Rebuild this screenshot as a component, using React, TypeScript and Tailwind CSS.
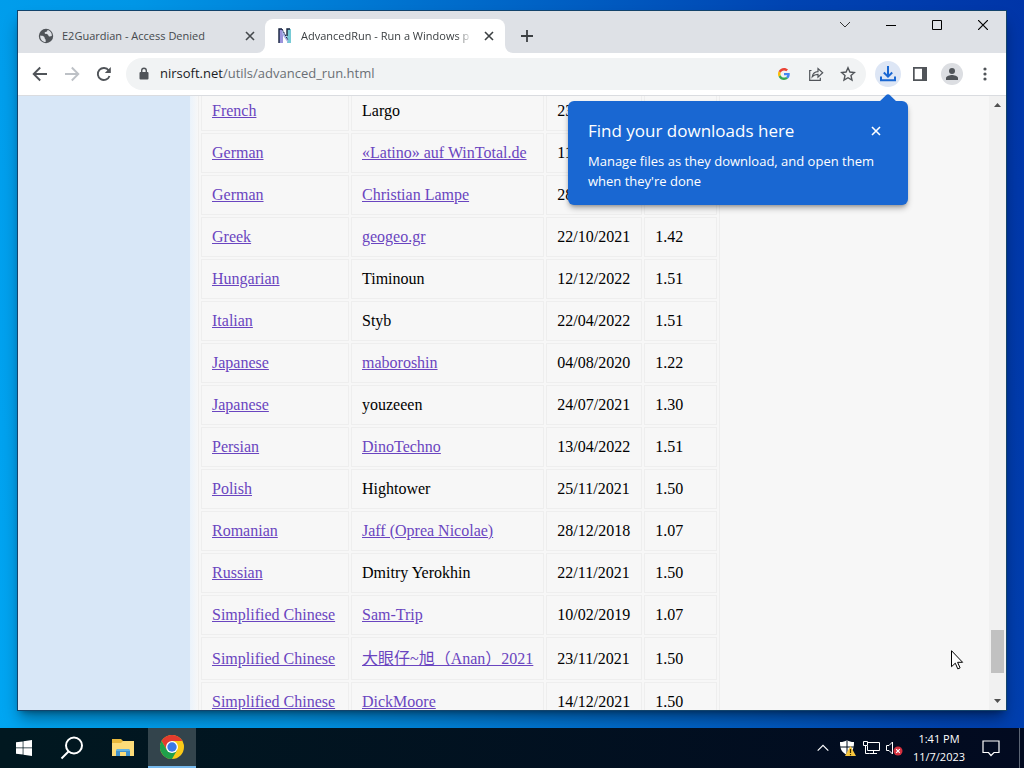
import React from "react";

type Row = { lang: string; author: string; linked: boolean; date: string; version: string };

const rows: Row[] = [
  { lang: "French", author: "Largo", linked: false, date: "23/11/2021", version: "1.50" },
  { lang: "German", author: "«Latino» auf WinTotal.de", linked: true, date: "11/12/2022", version: "1.51" },
  { lang: "German", author: "Christian Lampe", linked: true, date: "28/11/2021", version: "1.50" },
  { lang: "Greek", author: "geogeo.gr", linked: true, date: "22/10/2021", version: "1.42" },
  { lang: "Hungarian", author: "Timinoun", linked: false, date: "12/12/2022", version: "1.51" },
  { lang: "Italian", author: "Styb", linked: false, date: "22/04/2022", version: "1.51" },
  { lang: "Japanese", author: "maboroshin", linked: true, date: "04/08/2020", version: "1.22" },
  { lang: "Japanese", author: "youzeeen", linked: false, date: "24/07/2021", version: "1.30" },
  { lang: "Persian", author: "DinoTechno", linked: true, date: "13/04/2022", version: "1.51" },
  { lang: "Polish", author: "Hightower", linked: false, date: "25/11/2021", version: "1.50" },
  { lang: "Romanian", author: "Jaff (Oprea Nicolae)", linked: true, date: "28/12/2018", version: "1.07" },
  { lang: "Russian", author: "Dmitry Yerokhin", linked: false, date: "22/11/2021", version: "1.50" },
  { lang: "Simplified Chinese", author: "Sam-Trip", linked: true, date: "10/02/2019", version: "1.07" },
  { lang: "Simplified Chinese", author: "大眼仔~旭（Anan）2021", linked: true, date: "23/11/2021", version: "1.50" },
  { lang: "Simplified Chinese", author: "DickMoore", linked: true, date: "14/12/2021", version: "1.50" },
];

function CloseIcon() {
  return (
    <svg width="10" height="10" viewBox="0 0 10 10" fill="none" stroke="currentColor" strokeWidth="1.6">
      <path d="M1 1l8 8M9 1l-8 8" />
    </svg>
  );
}

function TabStrip() {
  return (
    <div className="flex h-[42px] shrink-0 bg-[#dee1e6]">
      <div className="flex w-[247px] items-center pt-2 pl-5 text-[#45494d]">
        <svg width="16" height="16" viewBox="0 0 16 16" className="shrink-0">
          <circle cx="8" cy="8" r="7.2" fill="#505459" />
          <path d="M2.200 7.500c1.600.2 3.200.3 4 1.200.8 1 .1 1.600 1 2.400.7.6.5 1.600.5 3C4.500 14 2 11.500 2.200 7.500zM9.500 1.900c-.4 1-.2 1.600-1.200 1.900-1.300.3-1.800.6-1.600 1.500.3.900 2.100.5 3 1.100.9.700.6 1.700 1.700 2 .8.200 1.400-.2 2.400-.5.400-2.800-1.500-5.300-4.300-6z" fill="#dee1e6" />
        </svg>
        <span className="ml-2 grow truncate text-[11px]">E2Guardian - Access Denied</span>
        <button aria-label="Close tab" className="mr-[10px] flex size-[10px] items-center justify-center"><CloseIcon /></button>
      </div>
      <div className="relative mt-2 flex w-[240px] items-center rounded-t-lg bg-white pl-[13px] text-[#3c4043]">
        <svg width="8" height="8" viewBox="0 0 8 8" className="absolute bottom-0 -left-2"><path d="M8 0v8H0a8 8 0 0 0 8-8z" fill="#fff" /></svg>
        <svg width="8" height="8" viewBox="0 0 8 8" className="absolute -right-2 bottom-0"><path d="M0 0v8h8a8 8 0 0 1-8-8z" fill="#fff" /></svg>
        <svg width="14" height="16" viewBox="0 0 14 16" className="shrink-0">
          <path d="M1 1h4v14H1z" fill="#9c94dc" />
          <path d="M9 1h4v14H9z" fill="#78cbd6" />
          <path d="M4 1l6 10v4L4 6z" fill="#a9b4e6" />
          <path d="M1 15V1h3M9 8V1h3" fill="none" stroke="#14213c" strokeWidth="1.400" />
          <path d="M4 1l6 11" fill="none" stroke="#14213c" strokeDasharray="2 1" />
        </svg>
        <span className="ml-[9px] w-[171px] overflow-hidden text-[11px] whitespace-nowrap [mask-image:linear-gradient(to_right,black_156px,transparent_171px)]">AdvancedRun - Run a Windows p</span>
        <button aria-label="Close tab" className="ml-3 flex size-[10px] shrink-0 items-center justify-center"><CloseIcon /></button>
      </div>
      <button aria-label="New tab" className="mt-2 ml-4 flex w-3 items-center justify-center text-[#3c4043]">
        <svg width="12" height="12" viewBox="0 0 12 12" className="shrink-0"><path d="M6 0v12M0 6h12" stroke="currentColor" strokeWidth="1.800" /></svg>
      </button>
      <div className="ml-auto flex h-7 text-black">
        <button aria-label="Search tabs" className="flex w-[46px] items-center justify-center"><svg width="12" height="8" viewBox="0 0 12 8"><path d="M1 1l5 5 5-5" fill="none" stroke="#333" /></svg></button>
        <button aria-label="Minimize" className="flex w-[46px] items-center justify-center"><svg width="10" height="10" viewBox="0 0 10 10"><path d="M0 5.500h10" stroke="currentColor" /></svg></button>
        <button aria-label="Maximize" className="flex w-[46px] items-center justify-center"><svg width="10" height="10" viewBox="0 0 10 10"><path d="M.5.500h9v9h-9z" fill="none" stroke="currentColor" /></svg></button>
        <button aria-label="Close window" className="flex w-[46px] items-center justify-center"><svg width="10" height="10" viewBox="0 0 10 10"><path d="M0 0l10 10M10 0L0 10" stroke="currentColor" strokeWidth="1.200" /></svg></button>
      </div>
    </div>
  );
}

function DownloadBubble() {
  return (
    <div role="dialog" aria-label="Find your downloads here" className="absolute top-10 right-[-7px] z-10 w-[340px] rounded-md bg-[#1967d2] px-5 pt-[18px] pb-[14px] text-left text-white shadow-md shadow-black/30">
      <svg width="18" height="8" viewBox="0 0 18 8" className="absolute -top-[7px] right-[11px]"><path d="M0 8L7.500.800q1.500-1.300 3 0L18 8z" fill="#1967d2" /></svg>
      <div className="flex items-center justify-between">
        <h2 className="text-[17px] leading-6">Find your downloads here</h2>
        <button aria-label="Dismiss" className="mr-[7px] flex size-[10px] items-center justify-center"><CloseIcon /></button>
      </div>
      <p className="mt-2 text-[13px] leading-5 font-medium whitespace-nowrap">Manage files as they download, and open them<br />when they're done</p>
    </div>
  );
}

function Toolbar() {
  return (
    <div className="flex h-[43px] shrink-0 items-center border-b border-[#dadce0] bg-white pl-[14px] text-[#505459]">
      <div className="flex gap-4">
        <button aria-label="Back"><svg width="16" height="16" viewBox="0 0 16 16" fill="none" stroke="currentColor" strokeWidth="1.900"><path d="M15 8H2M8.200 1.500L1.700 8l6.500 6.500" /></svg></button>
        <button aria-label="Forward" className="text-[#bdc1c6]"><svg width="16" height="16" viewBox="0 0 16 16" fill="none" stroke="currentColor" strokeWidth="1.900"><path d="M1 8h13M7.800 1.500L14.300 8l-6.500 6.500" /></svg></button>
        <button aria-label="Reload"><svg width="16" height="16" viewBox="0 0 16 16"><path d="M13.500 10a6 6 0 1 1-.8-5.500" fill="none" stroke="currentColor" strokeWidth="1.900" /><path d="M14.800 1v6h-6z" fill="currentColor" /></svg></button>
      </div>
      <div className="ml-[14px] flex h-8 min-w-0 grow items-center rounded-full bg-[#f1f3f4] pr-[10px] pl-3">
        <svg width="12" height="14" viewBox="0 0 12 14" className="shrink-0"><rect x="1.500" y="5" width="9" height="7.500" rx="1" fill="currentColor" /><path d="M3.700 5V3.500a2.300 2.300 0 0 1 4.600 0V5" fill="none" stroke="currentColor" strokeWidth="1.400" /></svg>
        <a href="#address" className="ml-[10px] grow text-[13px] text-[#6a6f74]"><span className="text-[#202124]">nirsoft.net</span>/utils/advanced_run.html</a>
        <div className="flex items-center gap-4">
          <button aria-label="Search with Google">
            <svg width="16" height="16" viewBox="0 0 48 48" className="p-[2px]"><path fill="#EA4335" d="M24 9.500c3.540 0 6.710 1.220 9.210 3.600l6.850-6.850C35.900 2.380 30.470 0 24 0 14.620 0 6.510 5.380 2.560 13.220l7.980 6.190C12.430 13.720 17.740 9.500 24 9.500z" /><path fill="#4285F4" d="M46.980 24.550c0-1.570-.15-3.090-.38-4.550H24v9.020h12.940c-.58 2.960-2.260 5.480-4.780 7.180l7.730 6c4.510-4.180 7.090-10.360 7.090-17.650z" /><path fill="#FBBC05" d="M10.530 28.590A14.500 14.500 0 0 1 9.770 24c0-1.600.27-3.140.76-4.590l-7.980-6.190A23.900 23.900 0 0 0 0 24c0 3.880.92 7.540 2.560 10.780z" /><path fill="#34A853" d="M24 48c6.480 0 11.930-2.130 15.890-5.810l-7.730-6c-2.150 1.450-4.920 2.300-8.160 2.300-6.260 0-11.570-4.220-13.470-9.910l-7.980 6.190C6.510 42.620 14.620 48 24 48z" /></svg>
          </button>
          <button aria-label="Share"><svg width="16" height="16" viewBox="0 0 16 16" fill="none" stroke="currentColor" strokeWidth="1.200"><path d="M3.500 4.500H1.700v9.800h10.600v-2.500M4.300 10.700c.5-3.200 2.400-4.900 5.700-5V2.500l4.700 4.300-4.700 4.400V8.300c-2.500 0-4.200.6-5.700 2.400z" /></svg></button>
          <button aria-label="Bookmark this page"><svg width="16" height="16" viewBox="0 0 16 16" fill="none" stroke="currentColor" strokeWidth="1.400"><path d="M8 1.800l1.900 4.200 4.600.5L11 9.600l1 4.500-4-2.400-4 2.400 1-4.500L1.500 6.500l4.600-.5z" /></svg></button>
        </div>
      </div>
      <div className="ml-[9px] flex items-center">
        <div className="relative flex size-[26px] items-center justify-center rounded-full bg-[#dde6f5]">
          <button aria-label="Downloads" className="text-[#1967d2]"><svg width="16" height="16" viewBox="0 0 16 16" fill="none" stroke="currentColor" strokeWidth="2"><path d="M8 0v10M3.800 6.500L8 10.700l4.200-4.200M1 10.500v3.700h14v-3.700" /></svg></button>
          <DownloadBubble />
        </div>
        <button aria-label="Side panel" className="ml-3"><svg width="14" height="14" viewBox="0 0 14 14"><path d="M0 0h14v14H0zM1.700 1.700v10.600h7.300V1.700z" fillRule="evenodd" fill="currentColor" /></svg></button>
        <button aria-label="Profile" className="ml-[14px] flex size-[22px] items-center justify-center rounded-full bg-[#dcdee2]"><svg width="14" height="14" viewBox="0 0 14 14" fill="currentColor"><circle cx="7" cy="4" r="3" /><path d="M1 13v-2c0-2 4-3 6-3s6 1 6 3v2z" /></svg></button>
        <button aria-label="Menu" className="mr-[19px] ml-5"><svg width="4" height="14" viewBox="0 0 4 14" fill="currentColor"><circle cx="2" cy="2" r="1.600" /><circle cx="2" cy="7" r="1.600" /><circle cx="2" cy="12" r="1.600" /></svg></button>
      </div>
    </div>
  );
}

function PageContent() {
  return (
    <div className="flex min-h-0 grow overflow-hidden bg-[#f7f7f7]">
      <div className="w-[172px] shrink-0 bg-[#d8e7f7]" />
      <div className="w-2 shrink-0 bg-linear-to-r from-[#ebf3fb] to-[#f7f7f7]" />
      <div className="min-w-0 grow">
        <table className="-mt-2 border-separate border-spacing-0.5 border border-[#eeeeee] text-left [font-family:'Liberation_Serif','Noto_Sans_CJK_SC',serif] text-base leading-[18px] text-black">
          <tbody>
            {rows.map((r, i) => (
              <tr key={i} className={i === 13 ? "h-[43px]" : "h-10"}>
                <td className="w-[148px] border border-[#eeeeee] px-[10px]"><a href="#language" className="text-[#6a45c0] underline">{r.lang}</a></td>
                <td className="w-[193px] border border-[#eeeeee] px-[10px] whitespace-nowrap">{r.linked ? <a href="#author" className="text-[#6a45c0] underline">{r.author}</a> : r.author}</td>
                <td className="w-24 border border-[#eeeeee] px-[10px]">{r.date}</td>
                <td className="w-[73px] border border-[#eeeeee] px-[10px]">{r.version}</td>
              </tr>
            ))}
          </tbody>
        </table>
      </div>
      <div className="flex w-[17px] shrink-0 flex-col items-center bg-[#f1f1f1]">
        <svg width="7" height="4" viewBox="0 0 7 4" className="mt-[7px]"><path d="M0 4l3.500-4L7 4z" fill="#505050" /></svg>
        <div className="grow" />
        <div className="h-[43px] w-[13px] bg-[#c1c1c1]" />
        <svg width="7" height="4" viewBox="0 0 7 4" className="mt-[26px] mb-[7px]"><path d="M0 0l3.500 4L7 0z" fill="#505050" /></svg>
      </div>
    </div>
  );
}

function Taskbar() {
  return (
    <div className="flex h-10 shrink-0 bg-linear-to-r from-[#011820] to-[#020a20] text-white">
      <button aria-label="Start" className="flex w-12 items-center justify-center"><svg width="16" height="16" viewBox="0 0 16 16" fill="#fff"><path d="M0 2.300l6.700-.9v6.200H0zM7.400 1.300L16 0v7.600H7.400zM0 8.300h6.700v6.300L0 13.700zM7.400 8.300H16V16l-8.600-1.200z" /></svg></button>
      <button aria-label="Search" className="flex w-12 items-center justify-center"><svg width="24" height="24" viewBox="0 0 24 24" fill="none" stroke="#fff" strokeWidth="2"><circle cx="14" cy="9.500" r="8" /><path d="M8.500 15.500L1.500 22.500" /></svg></button>
      <button aria-label="File Explorer" className="flex w-[52px] items-center justify-center pl-[2px]"><svg width="22" height="20" viewBox="0 0 22 20"><path d="M0 1h9l2 2h11v15H0z" fill="#e8b83d" /><path d="M0 5h9l2-2h11v15H0z" fill="#fddc79" /><path d="M4 18v-6l2-1h10l2 1v6h-4v-4H8v4z" fill="#4293cd" /><path d="M4 12l2-1h10l2 1v1H4z" fill="#65b4e2" /></svg></button>
      <button aria-label="Google Chrome" className="flex w-12 items-center justify-center border-b-2 border-[#76b9ed] bg-[#33444c]">
        <svg width="24" height="24" viewBox="0 0 24 24"><circle cx="12" cy="12" r="12" fill="#fbc917" /><path d="M12 6h10.400A12 12 0 0 0 1.600 6L6.800 15z" fill="#e33b2e" /><path d="M1.600 6A12 12 0 0 0 12 24l5.200-9-5.200 2-5.200-2z" fill="#1fa04b" /><circle cx="12" cy="12" r="6" fill="#fff" /><circle cx="12" cy="12" r="4.700" fill="#3b78e7" /></svg>
      </button>
      <div className="ml-auto flex items-center">
        <button aria-label="Show hidden icons"><svg width="12" height="8" viewBox="0 0 12 8"><path d="M.7 6.700L6 1.400l5.300 5.300" fill="none" stroke="#fff" strokeWidth="1.200" /></svg></button>
        <button aria-label="Windows Security" className="ml-[11px]"><svg width="16" height="16" viewBox="0 0 16 16"><path d="M7 0c2 1.500 4 2 7 2 0 6-1 10-7 13C1 12 0 8 0 2c3 0 5-.5 7-2z" fill="#fff" /><path d="M7 0v15M0 7h14" stroke="#021020" /><path d="M10.500 6L16 16H5z" fill="#f8c63d" /><path d="M10.500 9v4M10.500 14v1.200" stroke="#3a2b00" strokeWidth="1.200" /></svg></button>
        <button aria-label="Network" className="ml-[7px]"><svg width="17" height="14" viewBox="0 0 17 14" fill="none" stroke="#fff"><path d="M5 1.500h11.500v8H4.500V5M10.500 9.500v3M6.500 12.500H14M.5.500h4v4h-4zM2.500 4.500v8h4" /></svg></button>
        <button aria-label="Volume muted" className="ml-[6px]"><svg width="17" height="16" viewBox="0 0 17 16"><path d="M.5 5.500H3L6.500 2v12L3 10.500H.5z" fill="none" stroke="#fff" /><circle cx="12" cy="11" r="4.500" fill="#d5303e" /><path d="M10.200 9.200l3.600 3.600M13.800 9.200l-3.600 3.600" stroke="#fff" strokeWidth="1.200" /></svg></button>
        <div className="ml-[9px] w-[54px] text-center text-[11px] leading-[18px] whitespace-nowrap"><div>1:41 PM</div><div>11/7/2023</div></div>
        <button aria-label="Notifications" className="ml-4"><svg width="18" height="18" viewBox="0 0 18 18" fill="none" stroke="#fff" strokeWidth="1.200"><path d="M1 2h16v11.500h-5L9 16.500l-2.500-3H1z" /></svg></button>
        <div className="mr-1 ml-[19px] h-10 w-px bg-[#5c6575]" />
      </div>
    </div>
  );
}

export default function App() {
  return (
    <div className="relative flex h-screen flex-col overflow-hidden bg-[linear-gradient(78deg,#00a6f2_0%,#0096e6_25%,#006fcd_50%,#0044b2_80%,#0035a8_100%)] [font-family:'Open_Sans','Noto_Sans',sans-serif]">
      <div className="flex min-h-0 grow px-[17px] pt-[10px] pb-[17px]">
        <div className="flex min-w-0 grow flex-col border border-[#12436b] shadow-lg shadow-black/40">
          <TabStrip />
          <Toolbar />
          <PageContent />
        </div>
      </div>
      <Taskbar />
      <svg width="13" height="20" viewBox="0 0 13 20" className="absolute top-[650px] left-[951px]"><path d="M.5.700v16l3.800-3.500 2.500 5.700 2.300-1-2.500-5.600h5z" fill="#fff" stroke="#000" /></svg>
    </div>
  );
}
